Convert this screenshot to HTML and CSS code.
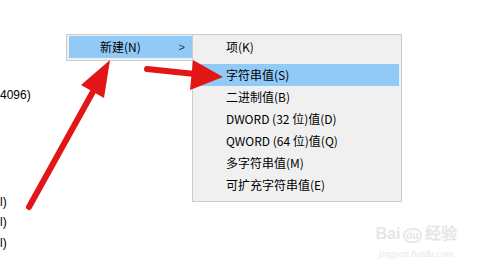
FILE: index.html
```html
<!DOCTYPE html>
<html lang="zh-CN">
<head>
    <meta charset="UTF-8">
    <title>新建</title>
    <link rel="stylesheet" href="styles.css">
</head>
<body>

    <section class="values">
        <p class="value-line first">4096)</p>
        <p class="value-line">l)</p>
        <p class="value-line">l)</p>
        <p class="value-line">l)</p>
    </section>

    <!-- context menu -->
    <ul class="menu main-menu">
        <li class="item active">新建(N)<span class="sub">&gt;</span></li>
    </ul>

    <ul class="menu sub-menu">
        <li class="item">项(K)</li>
        <li class="sep"></li>
        <li class="item active">字符串值(S)</li>
        <li class="item">二进制值(B)</li>
        <li class="item">DWORD (32 位)值(D)</li>
        <li class="item">QWORD (64 位)值(Q)</li>
        <li class="item">多字符串值(M)</li>
        <li class="item">可扩充字符串值(E)</li>
    </ul>

    <svg class="arrows" width="489" height="275" viewBox="0 0 489 275">
        <line x1="29" y1="207" x2="95" y2="88" stroke="#e21616" stroke-width="6" stroke-linecap="round"/>
        <polygon points="110,60 104,98 81,85" fill="#e21616"/>
        <line x1="147" y1="69" x2="195" y2="74" stroke="#e21616" stroke-width="6" stroke-linecap="round"/>
        <polygon points="223,77 190,90 193,60" fill="#e21616"/>
    </svg>

    <div class="watermark">
        <div class="wm-logo">Bai<span class="wm-du">du</span>经验</div>
        <div class="wm-url">jingyan.baidu.com</div>
    </div>

</body>
</html>
```

FILE: styles.css
```css
* {
    margin: 0;
    padding: 0;
    box-sizing: border-box;
}

body {
    width: 489px;
    height: 275px;
    overflow: hidden;
    position: relative;
    background-color: #fff;
    font-family: "Noto Sans CJK SC", "Liberation Sans", sans-serif;
    font-size: 12px;
    color: #000;
}

/* registry values peeking in from the left */
.values {
    padding-top: 87px;
    font-family: "Liberation Sans", sans-serif;
    font-size: 12px;
}

.value-line {
    height: 20.5px;
    line-height: 16px;
}

.value-line.first {
    margin-bottom: 86px;
}

/* menus */
.menu {
    position: absolute;
    list-style: none;
    background-color: #f0f0f0;
    border: 1px solid #cccccc;
    padding: 1px 2px;
}

.main-menu {
    left: 66px;
    top: 34px;
    width: 130px;
    height: 27px;
}

.sub-menu {
    left: 192px;
    top: 34px;
    width: 210px;
    height: 168px;
    padding: 1px 2px 4px;
}

.item {
    position: relative;
    height: 22px;
    line-height: 22px;
    padding-left: 31px;
    white-space: nowrap;
}

.item.active {
    background-color: #91c9f7;
}

.sub {
    position: absolute;
    right: 8px;
    top: 0;
    font-family: "Liberation Sans", sans-serif;
    font-size: 11px;
    color: #333;
}

.sep {
    height: 6px;
}

.arrows {
    position: absolute;
    left: 0;
    top: 0;
}

.watermark {
    position: absolute;
    left: 370px;
    top: 224px;
    width: 92px;
    color: #e6e6e6;
    text-align: center;
}

.wm-logo {
    font-family: "Liberation Sans", sans-serif;
    font-size: 16px;
    font-weight: bold;
    line-height: 20px;
}

.wm-du {
    font-size: 10px;
    border: 2px solid #e8e8e8;
    border-radius: 8px;
    padding: 0 1px;
    margin: 0 3px;
}

.wm-url {
    font-family: "Liberation Serif", serif;
    font-style: italic;
    font-size: 10px;
    line-height: 16px;
}
```
